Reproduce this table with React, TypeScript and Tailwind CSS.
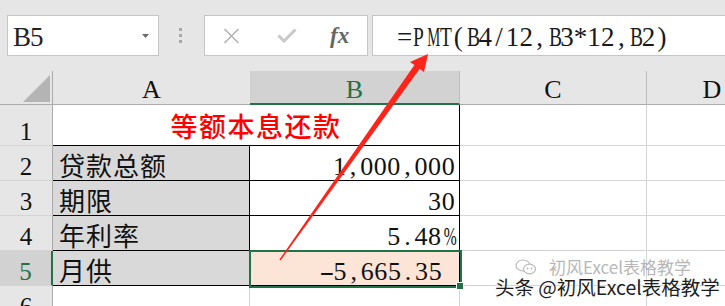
import React from "react";

const serif = "font-['Liberation_Serif','Noto_Sans_CJK_SC',serif]";
const cjk = "font-['Noto_Sans_CJK_SC',sans-serif]";

// SimSun-like fixed-width rendering for half-width text
const Mono = ({ text }: { text: string }) => (
  <>
    {text.split("").map((c, i) => {
      let cls = "inline-block w-[13.6px] text-center";
      if (c === "M") cls = "inline-block w-[13.6px] text-center scale-x-[0.54]";
      else if (c === "%") cls = "inline-block w-[13.6px] text-center scale-x-[0.6]";
      else if (/[A-Z]/.test(c)) cls = "inline-block w-[13.6px] text-center scale-x-[0.72]";
      else if (c === "-") cls = "inline-block w-[13.6px] text-center scale-x-[1.7]";
      return (
        <span key={i} className={cls}>
          {c}
        </span>
      );
    })}
  </>
);

const grid = "border-r border-b border-[#d4d4d4]";
const box = "border-r border-b border-black";

const RowHead = ({ n, active, h }: { n: string; active?: boolean; h: string }) => (
  <div
    className={`${h} w-[53px] shrink-0 flex items-end justify-center pb-[1px] ${serif} text-[25px] leading-none border-b border-b-[#d4d4d4] ${
      active
        ? "bg-[#d2d2d2] text-[#217346] border-r-2 border-r-[#217346]"
        : "bg-[#e6e6e6] text-[#111] border-r border-r-[#ababab]"
    }`}
  >
    {n}
  </div>
);

const LabelCell = ({ text }: { text: string }) => (
  <div className={`w-[197px] shrink-0 bg-[#d9d9d9] ${box} flex items-end pl-[6px] pb-[2px]`}>
    <span className={`${cjk} text-[26px] leading-none tracking-[1px] text-[#111]`}>{text}</span>
  </div>
);

const ValueCell = ({ text, sel }: { text: string; sel?: boolean }) => (
  <div
    className={`w-[210px] shrink-0 ${box} flex items-end justify-end ${serif} text-[26px] leading-none text-[#111] ${
      sel ? "bg-[#fce4d6] pr-[17px]" : "bg-white pr-[4px]"
    }`}
  >
    <span>
      <Mono text={text} />
    </span>
  </div>
);

const Filler = () => (
  <>
    <div className={`w-[187px] shrink-0 ${grid}`} />
    <div className={`w-[130px] shrink-0 ${grid}`} />
  </>
);

const App = () => {
  return (
    <div className="relative w-[725px] h-[306px] overflow-hidden bg-white">
      {/* toolbar */}
      <div className="h-[71px] bg-[#e6e6e6] pt-[15px] flex items-start">
        <div className="ml-[7px] w-[152px] h-[41px] shrink-0 bg-white border border-[#c6c6c6] flex items-end justify-between pl-[5px] pr-[9px] pb-[4px]">
          <span className={`${serif} text-[27px] leading-none text-[#222] tracking-[-1px]`}>B5</span>
          <svg width="7" height="4" viewBox="0 0 7 4" className="mb-[13px]">
            <path d="M0 0h7L3.5 4z" fill="#6b6b6b" />
          </svg>
        </div>
        <div className="ml-[19px] w-[5px] h-[41px] shrink-0 flex flex-col items-center justify-center gap-[3px]">
          <span className="w-[3px] h-[3px] bg-[#a8a8a8]" />
          <span className="w-[3px] h-[3px] bg-[#a8a8a8]" />
          <span className="w-[3px] h-[3px] bg-[#a8a8a8]" />
        </div>
        <div className="ml-[21px] w-[164px] h-[41px] shrink-0 bg-white border border-[#c6c6c6] flex items-center">
          <svg width="17" height="16" viewBox="0 0 17 16" className="ml-[18px]">
            <path d="M1.5 1 15.5 15M15.5 1 1.5 15" stroke="#b4b4b4" strokeWidth="1.6" fill="none" />
          </svg>
          <svg width="20" height="15" viewBox="0 0 20 15" className="ml-[37px]">
            <path d="M1.5 7.5 7 13 18.5 1.5" stroke="#c8c8c8" strokeWidth="3" fill="none" />
          </svg>
          <span className={`ml-[33px] ${serif} italic font-bold text-[23px] leading-none text-[#666]`}>fx</span>
        </div>
        <div className="ml-[4px] flex-1 h-[41px] bg-white border border-r-0 border-[#c6c6c6] flex items-end pl-[24px] pb-[4px]">
          <span className={`${serif} text-[27px] leading-none text-[#1a1a1a]`}>
            <Mono text="=PMT(B4/12,B3*12,B2)" />
          </span>
        </div>
      </div>

      {/* column headers */}
      <div className="flex h-[34px]">
        <div className="w-[53px] shrink-0 bg-[#e6e6e6] border-r border-b border-[#ababab] flex items-end justify-end pr-[2px] pb-[2px]">
          <svg width="27" height="27" viewBox="0 0 27 27">
            <path d="M27 0V27H0z" fill="#b4b4b4" />
          </svg>
        </div>
        <div className={`w-[197px] shrink-0 bg-[#e6e6e6] border-b border-[#ababab] flex items-end justify-center pb-[1px] ${serif} text-[26px] leading-none text-[#111]`}>
          A
        </div>
        <div className={`w-[210px] shrink-0 bg-[#d2d2d2] border-r border-r-[#bdbdbd] border-b-2 border-b-[#217346] flex items-end justify-center ${serif} text-[26px] leading-none text-[#217346]`}>
          B
        </div>
        <div className={`w-[187px] shrink-0 bg-[#e6e6e6] border-r border-[#bdbdbd] border-b border-b-[#ababab] flex items-end justify-center pb-[1px] ${serif} text-[26px] leading-none text-[#111]`}>
          C
        </div>
        <div className={`w-[130px] shrink-0 bg-[#e6e6e6] border-b border-[#ababab] flex items-end justify-center pb-[1px] ${serif} text-[26px] leading-none text-[#111]`}>
          D
        </div>
      </div>

      {/* row 1 */}
      <div className="flex h-[41px]">
        <RowHead n="1" h="h-[41px]" />
        <div className={`w-[407px] shrink-0 ${box} flex items-center justify-center pt-[1px]`}>
          <span className={`${cjk} text-[27px] leading-none tracking-[1.5px] text-[#ff0000] font-medium`}>等额本息还款</span>
        </div>
        <Filler />
      </div>

      <div className="flex h-[35px]">
        <RowHead n="2" h="h-[35px]" />
        <LabelCell text="贷款总额" />
        <ValueCell text="1,000,000" />
        <Filler />
      </div>
      <div className="flex h-[35px]">
        <RowHead n="3" h="h-[35px]" />
        <LabelCell text="期限" />
        <ValueCell text="30" />
        <Filler />
      </div>
      <div className="flex h-[35px]">
        <RowHead n="4" h="h-[35px]" />
        <LabelCell text="年利率" />
        <ValueCell text="5.48%" />
        <Filler />
      </div>
      <div className="flex h-[35px]">
        <RowHead n="5" h="h-[35px]" active />
        <LabelCell text="月供" />
        <ValueCell text="-5,665.35" sel />
        <Filler />
      </div>
      <div className="flex h-[35px]">
        <RowHead n="6" h="h-[35px]" />
        <div className={`w-[197px] shrink-0 ${grid}`} />
        <div className={`w-[210px] shrink-0 ${grid}`} />
        <Filler />
      </div>

      {/* selection */}
      <div className="absolute left-[249px] top-[250px] w-[213px] h-[38px] border-2 border-[#217346]" />
      <div className="absolute left-[456px] top-[282px] w-[8px] h-[8px] bg-[#217346] border border-white" />

      {/* annotation arrow */}
      <svg className="absolute inset-0 pointer-events-none" width="725" height="306" viewBox="0 0 725 306">
        <polygon
          points="279.4,259.6 414.4,65.1 410,62 428,54 424,72 419.6,68.9 280.6,260.4"
          fill="#ff2419"
        />
      </svg>

      {/* watermarks */}
      <div className={`absolute left-[515px] top-[258px] flex items-center gap-[12px] ${cjk} text-[17px] leading-none text-[#9a9a9a] opacity-70`}>
        <svg width="22" height="16" viewBox="0 0 22 16">
          <ellipse cx="8" cy="6.5" rx="7" ry="5.5" fill="none" stroke="#9a9a9a" strokeWidth="1.2" />
          <ellipse cx="14.5" cy="10" rx="6" ry="4.8" fill="white" stroke="#9a9a9a" strokeWidth="1.2" />
          <circle cx="12.5" cy="9.5" r="0.9" fill="#9a9a9a" />
          <circle cx="16.5" cy="9.5" r="0.9" fill="#9a9a9a" />
        </svg>
        <span>初风Excel表格教学</span>
      </div>
      <div
        className={`absolute left-[495px] top-[277px] ${cjk} text-[19.5px] leading-none text-[#1e1e1e] [text-shadow:0_0_2px_#fff,0_0_2px_#fff,0_0_1px_#fff]`}
      >
        头条 @初风Excel表格教学
      </div>
    </div>
  );
};

export default App;
